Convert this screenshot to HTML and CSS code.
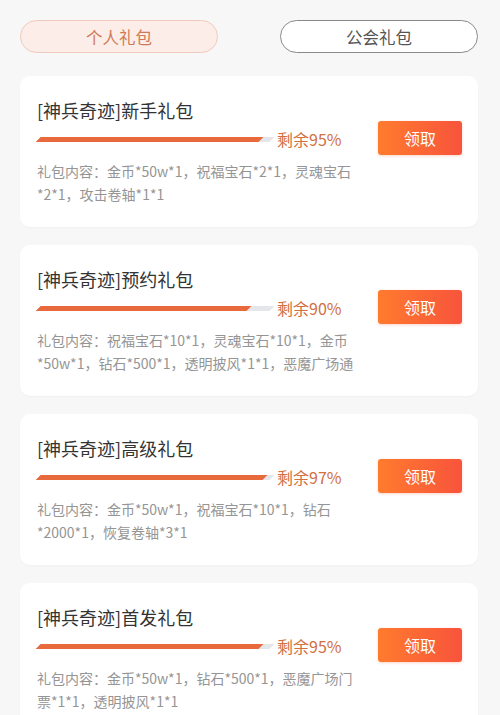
FILE: index.html
```html
<!DOCTYPE html>
<html lang="zh-CN">
<head>
  <meta charset="UTF-8">
  <meta name="viewport" content="width=device-width, initial-scale=1.0">
  <title>礼包</title>
  <link rel="stylesheet" href="styles.css">
</head>
<body>
  <div class="page">
    <div class="tabs">
      <div class="tab tab-active">个人礼包</div>
      <div class="tab">公会礼包</div>
    </div>

    <div class="gift-list">
      <div class="gift-card">
        <div class="gift-info">
          <div class="gift-title">[神兵奇迹]新手礼包</div>
          <div class="gift-progress">
            <div class="bar"><div class="bar-fill" style="width: 95.5%"></div></div>
            <span class="remain">剩余95%</span>
          </div>
          <div class="gift-desc">礼包内容：金币*50w*1，祝福宝石*2*1，灵魂宝石*2*1，攻击卷轴*1*1</div>
        </div>
        <button class="get-btn">领取</button>
      </div>

      <div class="gift-card">
        <div class="gift-info">
          <div class="gift-title">[神兵奇迹]预约礼包</div>
          <div class="gift-progress">
            <div class="bar"><div class="bar-fill" style="width: 90%"></div></div>
            <span class="remain">剩余90%</span>
          </div>
          <div class="gift-desc">礼包内容：祝福宝石*10*1，灵魂宝石*10*1，金币*50w*1，钻石*500*1，透明披风*1*1，恶魔广场通</div>
        </div>
        <button class="get-btn">领取</button>
      </div>

      <div class="gift-card">
        <div class="gift-info">
          <div class="gift-title">[神兵奇迹]高级礼包</div>
          <div class="gift-progress">
            <div class="bar"><div class="bar-fill" style="width: 97%"></div></div>
            <span class="remain">剩余97%</span>
          </div>
          <div class="gift-desc">礼包内容：金币*50w*1，祝福宝石*10*1，钻石*2000*1，恢复卷轴*3*1</div>
        </div>
        <button class="get-btn">领取</button>
      </div>

      <div class="gift-card">
        <div class="gift-info">
          <div class="gift-title">[神兵奇迹]首发礼包</div>
          <div class="gift-progress">
            <div class="bar"><div class="bar-fill" style="width: 95.5%"></div></div>
            <span class="remain">剩余95%</span>
          </div>
          <div class="gift-desc">礼包内容：金币*50w*1，钻石*500*1，恶魔广场门票*1*1，透明披风*1*1</div>
        </div>
        <button class="get-btn">领取</button>
      </div>
    </div>
  </div>
</body>
</html>
```

FILE: styles.css
```css
body {
  margin: 0;
  background-color: #f7f7f7;
  font-family: "Noto Sans CJK SC", "Noto Sans", sans-serif;
}
.page {
  padding: 20px 22px 0 20px;
}
.tabs {
  display: flex;
  justify-content: space-between;
}
.tab {
  width: 198px;
  height: 33px;
  box-sizing: border-box;
  border: 1px solid #8a8a8a;
  border-radius: 17px;
  background-color: #fff;
  color: #555;
  font-size: 16.5px;
  display: flex;
  align-items: center;
  justify-content: center;
}
.tab-active {
  background-color: #fcede8;
  border-color: #f1cabd;
  color: #cf7a56;
}
.gift-list {
  display: flex;
  flex-direction: column;
  gap: 18px;
  margin-top: 23px;
}
.gift-card {
  display: flex;
  justify-content: space-between;
  align-items: flex-start;
  background-color: #fff;
  border-radius: 10px;
  padding: 22px 16px 21px 17px;
  box-shadow: 0 1px 2px rgba(0, 0, 0, 0.03);
}
.gift-info {
  width: 318px;
}
.gift-title {
  font-size: 18px;
  line-height: 24px;
  color: #333;
}
.gift-progress {
  display: flex;
  align-items: center;
  height: 20px;
  margin-top: 7px;
}
.bar {
  width: 234px;
  height: 5px;
  margin-left: 1px;
  background-color: #e4e6e9;
  transform: skewX(-45deg);
  overflow: hidden;
}
.bar-fill {
  height: 100%;
  background-color: #e8693c;
}
.remain {
  margin-left: 5px;
  font-size: 16px;
  color: #d2703f;
}
.gift-desc {
  margin-top: 11px;
  font-size: 14px;
  line-height: 23px;
  color: #959595;
}
.get-btn {
  margin-top: 23px;
  width: 84px;
  height: 34px;
  border: none;
  border-radius: 3px;
  background: linear-gradient(90deg, #ff7b2e, #f8543c);
  box-shadow: 0 1px 3px rgba(240, 90, 50, 0.25);
  color: #fff;
  font-family: inherit;
  font-size: 16px;
  padding: 0;
  cursor: pointer;
}
```
